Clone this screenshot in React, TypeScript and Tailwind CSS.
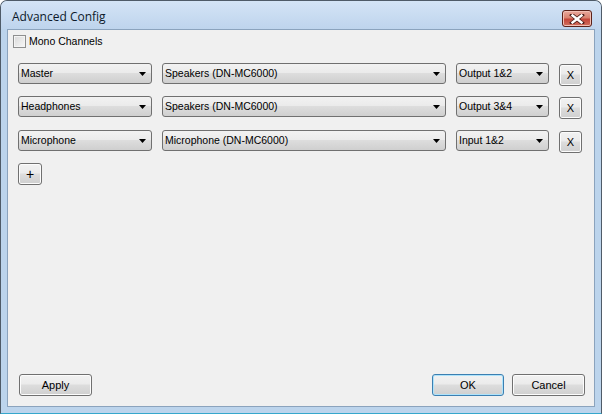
import React from 'react';

const btnFace =
  'bg-[linear-gradient(#f2f2f2_0%,#ebebeb_45%,#dddddd_50%,#cfcfcf_100%)]';

function Arrow() {
  return (
    <svg width="7" height="4" viewBox="0 0 7 4" className="shrink-0">
      <polygon points="0,0 7,0 3.5,4" fill="#000" />
    </svg>
  );
}

function Combo({ label, width }: { label: string; width: string }) {
  return (
    <div
      className={`flex h-[21px] ${width} items-center justify-between rounded-[3px] border border-[#707070] ${btnFace} pl-[2px] pr-[5px] text-[10.5px] text-black`}
    >
      <span className="leading-none">{label}</span>
      <Arrow />
    </div>
  );
}

function Button({ label, width, primary, big }: { label: string; width: string; primary?: boolean; big?: boolean }) {
  return (
    <div
      className={`flex h-[22px] ${width} items-center justify-center rounded-[3px] border ${
        primary ? 'border-[#3c7fb1] shadow-[inset_0_0_0_1px_#aee3fb]' : 'border-[#707070] shadow-[inset_0_0_0_1px_#fcfcfc]'
      } ${btnFace} ${big ? 'text-[14px]' : 'text-[11px]'} text-black`}
    >
      {label}
    </div>
  );
}

function Row({ a, b, c }: { a: string; b: string; c: string }) {
  return (
    <div className="flex h-[21px] items-start">
      <Combo label={a} width="w-[134px]" />
      <div className="ml-[10px]">
        <Combo label={b} width="w-[284px]" />
      </div>
      <div className="ml-[10px]">
        <Combo label={c} width="w-[93px]" />
      </div>
      <div className="ml-[10px] mt-[1px]">
        <Button label="X" width="w-[23px]" />
      </div>
    </div>
  );
}

export default function App() {
  return (
    <div className="flex h-[414px] w-[602px] flex-col overflow-hidden rounded-t-[7px] border border-[#4f5b68] border-b-[#35a7cc] bg-[#bcd4ec] font-['Liberation_Sans',Arial,sans-serif]">
      {/* title bar */}
      <div className="flex h-[28px] shrink-0 items-start justify-between bg-[linear-gradient(#d4e4f6,#bed4ed)] px-[6px]">
        <span className="mt-[7px] pl-[5px] font-['Open_Sans',sans-serif] text-[12px] leading-[18px] text-[#0c1a2a]">
          Advanced Config
        </span>
        <div className="mt-[9px] mr-[3px] flex h-[17px] w-[30px] items-center justify-center rounded-[3px] border border-[#5b2119] bg-[linear-gradient(#e9a99e_0%,#d9826f_45%,#c4463a_55%,#d0705f_100%)] shadow-[inset_0_0_0_1px_#f1c0b5]">
          <svg width="16" height="10" viewBox="0 0 16 10">
            <path d="M3 1 L13 9 M13 1 L3 9" stroke="#4a1e19" strokeWidth="4" strokeLinecap="square" />
            <path d="M3.5 1.5 L12.5 8.5 M12.5 1.5 L3.5 8.5" stroke="#fff" strokeWidth="2.4" strokeLinecap="square" />
          </svg>
        </div>
      </div>

      {/* client area */}
      <div className="mx-[6px] mb-[6px] flex flex-1 flex-col border border-[#8ba3bd] bg-[#f0f0f0] text-[10.5px] text-black">
        <div className="ml-[5px] mt-[5px] flex items-center">
          <div className="h-[13px] w-[13px] border border-[#8e8f8f] bg-[linear-gradient(135deg,#d8d8d8,#f8f8f8)] shadow-[inset_0_0_0_1px_#f4f4f4]" />
          <span className="ml-[3px] text-[10.5px] leading-none">Mono Channels</span>
        </div>

        <div className="ml-[10px] mt-[15px] flex flex-col">
          <Row a="Master" b="Speakers (DN-MC6000)" c="Output 1&2" />
          <div className="mt-[12px]">
            <Row a="Headphones" b="Speakers (DN-MC6000)" c="Output 3&4" />
          </div>
          <div className="mt-[13px]">
            <Row a="Microphone" b="Microphone (DN-MC6000)" c="Input 1&2" />
          </div>
          <div className="mt-[12px]">
            <Button label="+" width="w-[24px]" big />
          </div>
        </div>

        <div className="mt-auto mb-[10px] flex items-center px-[11px] pr-[9px]">
          <Button label="Apply" width="w-[73px]" />
          <div className="ml-auto">
            <Button label="OK" width="w-[72px]" primary />
          </div>
          <div className="ml-[8px]">
            <Button label="Cancel" width="w-[73px]" />
          </div>
        </div>
      </div>
    </div>
  );
}
